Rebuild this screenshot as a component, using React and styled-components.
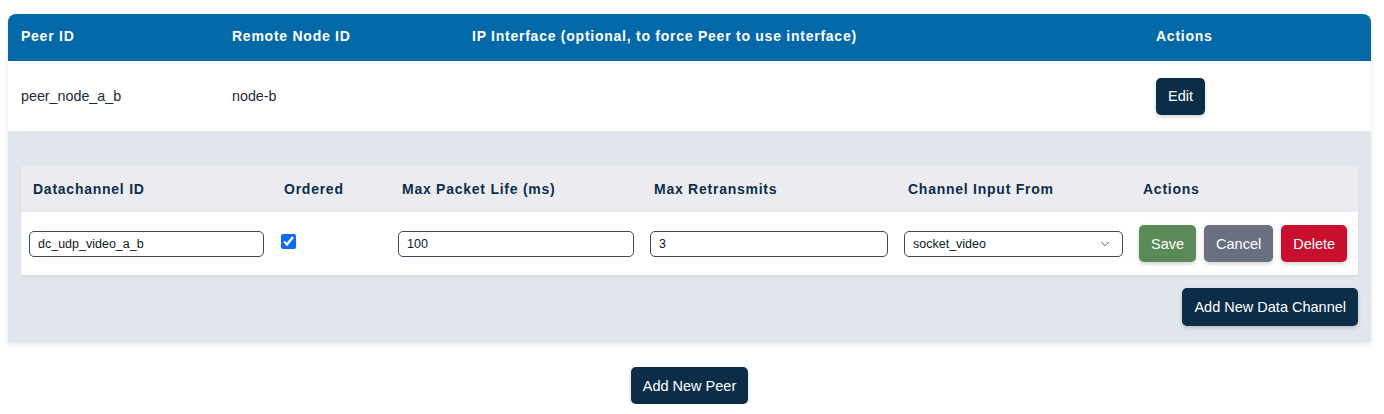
import React from 'react';
import styled, { createGlobalStyle } from 'styled-components';
import { ChevronDown } from 'lucide-react';

const GlobalStyle = createGlobalStyle`
  body {
    margin: 0;
    background: #ffffff;
    font-family: "Liberation Sans", Arial, Helvetica, sans-serif;
    color: #1e2a38;
  }
`;

const peerColumns = [211, 240, 684, 228];
const channelColumns = [251, 118, 252, 254, 235, 227];

const App = () => {
  return (
    <Page>
      <GlobalStyle />
      <PeerTable>
        <colgroup>
          {peerColumns.map((w, i) => (
            <col key={i} style={{ width: w }} />
          ))}
        </colgroup>
        <thead>
          <tr>
            <PeerHead>Peer ID</PeerHead>
            <PeerHead>Remote Node ID</PeerHead>
            <PeerHead>IP Interface (optional, to force Peer to use interface)</PeerHead>
            <PeerHead>Actions</PeerHead>
          </tr>
        </thead>
        <tbody>
          <tr>
            <PeerCell>peer_node_a_b</PeerCell>
            <PeerCell>node-b</PeerCell>
            <PeerCell />
            <PeerCell>
              <Button>Edit</Button>
            </PeerCell>
          </tr>
          <tr>
            <ExpandedCell colSpan={4}>
              <ChannelTable>
                <colgroup>
                  {channelColumns.map((w, i) => (
                    <col key={i} style={{ width: w }} />
                  ))}
                </colgroup>
                <thead>
                  <tr>
                    <ChannelHead>Datachannel ID</ChannelHead>
                    <ChannelHead>Ordered</ChannelHead>
                    <ChannelHead>Max Packet Life (ms)</ChannelHead>
                    <ChannelHead>Max Retransmits</ChannelHead>
                    <ChannelHead>Channel Input From</ChannelHead>
                    <ChannelHead>Actions</ChannelHead>
                  </tr>
                </thead>
                <tbody>
                  <tr>
                    <ChannelCell>
                      <TextInput defaultValue="dc_udp_video_a_b" />
                    </ChannelCell>
                    <ChannelCell>
                      <Check type="checkbox" defaultChecked />
                    </ChannelCell>
                    <ChannelCell>
                      <TextInput defaultValue="100" />
                    </ChannelCell>
                    <ChannelCell>
                      <TextInput defaultValue="3" />
                    </ChannelCell>
                    <ChannelCell>
                      <SelectWrap>
                        <Select defaultValue="socket_video">
                          <option value="socket_video">socket_video</option>
                        </Select>
                        <Chevron size={14} strokeWidth={1.6} />
                      </SelectWrap>
                    </ChannelCell>
                    <ChannelCell>
                      <ButtonRow>
                        <Button $variant="save">Save</Button>
                        <Button $variant="cancel">Cancel</Button>
                        <Button $variant="delete">Delete</Button>
                      </ButtonRow>
                    </ChannelCell>
                  </tr>
                </tbody>
              </ChannelTable>
              <ChannelFooter>
                <Button>Add New Data Channel</Button>
              </ChannelFooter>
            </ExpandedCell>
          </tr>
        </tbody>
      </PeerTable>
      <PageFooter>
        <Button>Add New Peer</Button>
      </PageFooter>
    </Page>
  );
};

const Page = styled.div`
  padding: 14px 13px 0 8px;
`;

const PeerTable = styled.table`
  width: 100%;
  table-layout: fixed;
  border-collapse: separate;
  border-spacing: 0;
  border-radius: 8px 8px 0 0;
  overflow: hidden;
  box-shadow: 0 2px 4px rgba(15, 35, 60, 0.12);
`;

const PeerHead = styled.th`
  height: 44px;
  padding: 0 13px 3px;
  background: #0369a8;
  color: #ffffff;
  font-size: 14px;
  font-weight: 700;
  letter-spacing: 0.75px;
  text-align: left;
`;

const PeerCell = styled.td`
  height: 70px;
  padding: 0 13px;
  background: #ffffff;
  font-size: 14.3px;
  color: #1e2a38;
  vertical-align: middle;
`;

const ExpandedCell = styled.td`
  padding: 35px 13px 16px;
  background: #e1e6ed;
`;

const ChannelTable = styled.table`
  width: 100%;
  table-layout: fixed;
  border-collapse: collapse;
  box-shadow: 0 1px 2px rgba(15, 35, 60, 0.08);
`;

const ChannelHead = styled.th`
  height: 45px;
  padding: 0 12px 1px;
  background: #ececf0;
  color: #0c2e4b;
  font-size: 14px;
  font-weight: 700;
  letter-spacing: 0.75px;
  text-align: left;
`;

const ChannelCell = styled.td`
  height: 63px;
  padding: 0 8px;
  background: #ffffff;
  vertical-align: middle;
`;

const TextInput = styled.input`
  box-sizing: border-box;
  width: 100%;
  height: 26px;
  padding: 0 8px;
  border: 1px solid #3a4a5c;
  border-radius: 5px;
  background: #ffffff;
  font-family: "Liberation Sans", Arial, sans-serif;
  font-size: 12.5px;
  color: #111820;
  outline: none;
`;

const Check = styled.input`
  width: 15px;
  height: 15px;
  margin: 0 0 5px 1px;
  accent-color: #0a6cf2;
  vertical-align: middle;
`;

const SelectWrap = styled.div`
  position: relative;
`;

const Select = styled.select`
  box-sizing: border-box;
  width: 100%;
  height: 26px;
  padding: 0 28px 0 8px;
  border: 1px solid #3a4a5c;
  border-radius: 5px;
  background: #ffffff;
  appearance: none;
  font-family: "Liberation Sans", Arial, sans-serif;
  font-size: 12.5px;
  color: #111820;
  outline: none;
`;

const Chevron = styled(ChevronDown)`
  position: absolute;
  right: 11px;
  top: 6px;
  color: #4a5260;
  pointer-events: none;
`;

const ButtonRow = styled.div`
  display: flex;
  gap: 8px;
`;

const buttonColors = {
  save: '#5a8a57',
  cancel: '#6b7080',
  delete: '#c8102e',
};

const Button = styled.button`
  height: 37px;
  padding: 0 12px;
  border: none;
  border-radius: 5px;
  background: ${(p) => buttonColors[p.$variant] || '#0c2d48'};
  color: #ffffff;
  font-family: "Liberation Sans", Arial, sans-serif;
  font-size: 14.5px;
  box-shadow: 0 2px 4px rgba(0, 0, 0, 0.18);
  cursor: pointer;
  white-space: nowrap;
`;

const ChannelFooter = styled.div`
  display: flex;
  justify-content: flex-end;
  margin-top: 13px;

  button {
    height: 38px;
  }
`;

const PageFooter = styled.div`
  display: flex;
  justify-content: center;
  padding-top: 25px;
`;

export default App;
